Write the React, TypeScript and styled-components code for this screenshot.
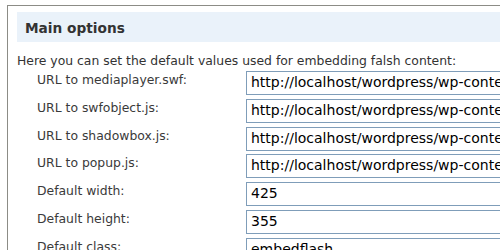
import styled, { createGlobalStyle } from "styled-components"

const GlobalStyle = createGlobalStyle`
html, body {
    margin: 0;
    padding: 0;
    overflow: hidden;
    background: #fff;
}
body {
    font-family: "DejaVu Sans", "Liberation Sans", sans-serif;
    color: #333;
}
`

const fields = [
    { label: "URL to mediaplayer.swf:", value: "http://localhost/wordpress/wp-content/plugins/flash-embed/mediaplayer.swf" },
    { label: "URL to swfobject.js:", value: "http://localhost/wordpress/wp-content/plugins/flash-embed/swfobject.js" },
    { label: "URL to shadowbox.js:", value: "http://localhost/wordpress/wp-content/plugins/flash-embed/shadowbox.js" },
    { label: "URL to popup.js:", value: "http://localhost/wordpress/wp-content/plugins/flash-embed/popup.js" },
    { label: "Default width:", value: "425" },
    { label: "Default height:", value: "355" },
    { label: "Default class:", value: "embedflash" },
]

const App = () => (
    <>
        <GlobalStyle />
        <Panel>
            <Header>Main options</Header>
            <Description>
                Here you can set the default values used for embedding falsh content:
            </Description>
            <Form>
                {fields.map((f) => (
                    <Row key={f.label}>
                        <Label>{f.label}</Label>
                        <Input type="text" defaultValue={f.value} readOnly />
                    </Row>
                ))}
            </Form>
        </Panel>
    </>
)

const Panel = styled.div`
margin: 5px 0 0 7px;
width: 700px;
border-top: 1px solid #8c8c86;
border-left: 1px solid #8c8c86;
padding: 6px 0 0 9px;
`

const Header = styled.h3`
margin: 0;
height: 27px;
padding: 3px 0 0 8px;
line-height: 27px;
background: #eaf2fa;
font-size: 13.7px;
font-weight: bold;
color: #333;
`

const Description = styled.p`
margin: 11px 0 0;
font-size: 12.4px;
line-height: 16px;
color: #333;
`

const Form = styled.div`
margin-top: 2px;
padding-left: 20px;
display: flex;
flex-direction: column;
gap: 3.8px;
`

const Row = styled.div`
display: grid;
grid-template-columns: 209px 1fr;
align-items: start;
height: 24px;
`

const Label = styled.label`
font-size: 12.4px;
line-height: 16px;
padding-top: 1px;
color: #3a3a3a;
`

const Input = styled.input`
box-sizing: border-box;
width: 340px;
height: 24px;
margin: 0;
padding: 0 4px 2px;
border: 1px solid #7f9db9;
font-family: "DejaVu Sans", sans-serif;
font-size: 14px;
color: #000;
background: #fff;
outline: none;
`

export default App
